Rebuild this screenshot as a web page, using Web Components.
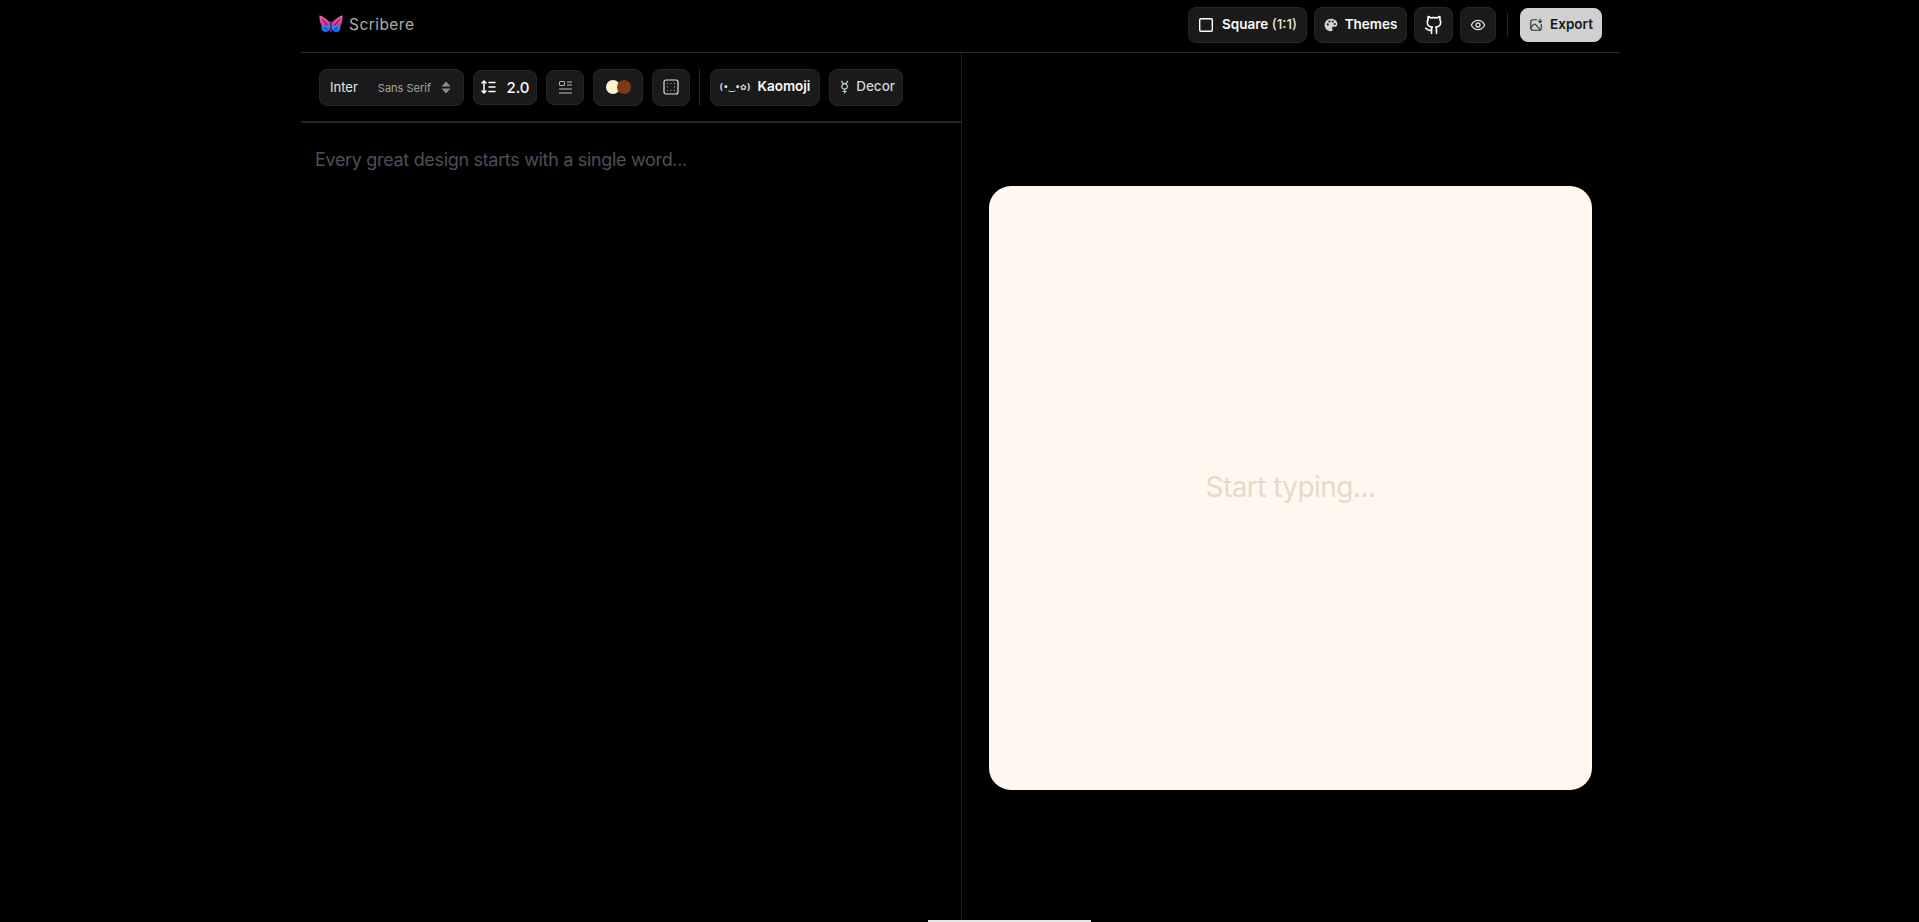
<!DOCTYPE html>
<html lang="en">
<head>
<meta charset="utf-8">
<title>Scribere</title>
<style>
  html, body { margin: 0; height: 100%; background: #000; overflow: hidden; }
  body { font-family: Inter, "Liberation Sans", sans-serif; }
</style>
</head>
<body>
<scribere-app>
  <scribere-header slot="header">
    <tool-btn slot="actions" style="width:119px;height:36px;--gap:8px">
      <svg slot="icon" width="16" height="16" viewBox="0 0 16 16" fill="none" stroke="#fff" stroke-width="1.4"><rect x="1.700" y="1.700" width="12.600" height="12.600" rx="1.200"/></svg>
      <span>Square <span style="color:#e8e2d4;font-weight:500">(1:1)</span></span>
    </tool-btn>
    <tool-btn slot="actions" style="width:93px;height:36px;--gap:7px">
      <svg slot="icon" width="14" height="14" viewBox="0 0 16 16"><path fill="#d4d4d4" fill-rule="evenodd" d="M8 .8C3.900.8.700 4 .700 8s3.200 7.200 7.300 7.200c1.200 0 1.900-.8 1.900-1.700 0-.5-.2-.8-.4-1.100-.2-.3-.4-.6-.4-1 0-.8.600-1.300 1.400-1.300h1.700c1.900 0 3.100-1.400 3.100-3.300C15.300 3.400 12 .8 8 .8zM4.300 8.500a1.200 1.200 0 1 1 0-2.400 1.200 1.200 0 0 1 0 2.400zM6.300 5.200a1.200 1.200 0 1 1 0-2.400 1.200 1.200 0 0 1 0 2.400zM10 5.200a1.200 1.200 0 1 1 0-2.400 1.200 1.200 0 0 1 0 2.400zM12.300 8a1.200 1.200 0 1 1 0-2.400 1.200 1.200 0 0 1 0 2.400z"/></svg>
      Themes
    </tool-btn>
    <tool-btn slot="actions" style="width:39px;height:36px">
      <svg slot="icon" width="20" height="20" viewBox="0 0 24 24" fill="none" stroke="#fff" stroke-width="2" stroke-linecap="round" stroke-linejoin="round"><path d="M15 22v-4a4.800 4.800 0 0 0-1-3.500c3 0 6-2 6-5.500.08-1.250-.27-2.480-1-3.500.28-1.150.28-2.350 0-3.500 0 0-1 0-3 1.500-2.640-.5-5.360-.5-8 0C6 2 5 2 5 2c-.3 1.150-.3 2.350 0 3.500A5.400 5.400 0 0 0 4 9c0 3.500 3 5.500 6 5.500-.39.490-.68 1.050-.85 1.650-.17.600-.22 1.230-.15 1.850v4"/><path d="M9 18c-4.510 2-5-2-7-2"/></svg>
    </tool-btn>
    <tool-btn slot="actions" style="width:36px;height:36px">
      <svg slot="icon" width="16" height="16" viewBox="0 0 24 24" fill="none" stroke="#ddd" stroke-width="2" stroke-linecap="round" stroke-linejoin="round"><path d="M2 12s3.500-7 10-7 10 7 10 7-3.500 7-10 7-10-7-10-7z"/><circle cx="12" cy="12" r="3"/></svg>
    </tool-btn>
    <tool-sep slot="actions" style="margin:0 5px 0 4px;height:24px"></tool-sep>
    <tool-btn slot="actions" primary style="width:82px;height:34px;--gap:7px">
      <svg slot="icon" width="14" height="14" viewBox="0 0 24 24" fill="none" stroke="#333" stroke-width="2" stroke-linecap="round" stroke-linejoin="round"><path d="M13 3H7a4 4 0 0 0-4 4v10a4 4 0 0 0 4 4h10a4 4 0 0 0 4-4v-6"/><path d="M3 17l5-6a2 2 0 0 1 3 0l8 9"/><path d="M19 2v6M16.500 5.500 19 8l2.500-2.500"/></svg>
      Export
    </tool-btn>
  </scribere-header>

  <editor-pane slot="left">
    <tool-btn slot="tools" style="width:145px;height:37px;margin-right:9px" flat>
      <font-picker family="Inter" kind="Sans Serif"></font-picker>
    </tool-btn>
    <tool-btn slot="tools" style="width:64px;height:35px;margin-right:9px;--gap:10px">
      <svg slot="icon" width="16" height="16" viewBox="0 0 16 16" fill="none" stroke="#fff" stroke-width="1.500" stroke-linecap="round" stroke-linejoin="round"><path d="M4 2v12M2 4l2-2 2 2M2 12l2 2 2-2M9 3.500h6M9 8h6M9 12.500h6"/></svg>
      <span style="font-size:15px;font-weight:500">2.0</span>
    </tool-btn>
    <tool-btn slot="tools" style="width:38px;height:35px;margin-right:9px">
      <svg slot="icon" width="15" height="15" viewBox="0 0 15 15" fill="none" stroke="#bbb" stroke-width="1"><rect x="1.500" y="1.500" width="5" height="4" rx=".6"/><path d="M9 2h5M9 5h5M1 9h13M1 13h13"/></svg>
    </tool-btn>
    <tool-btn slot="tools" style="width:50px;height:37px;margin-right:9px">
      <colour-dots slot="icon"></colour-dots>
    </tool-btn>
    <tool-btn slot="tools" style="width:38px;height:37px">
      <svg slot="icon" width="16" height="16" viewBox="0 0 16 16" fill="none"><rect x="1" y="1" width="14" height="14" rx="2" stroke="#e0e0e0" stroke-width="1.200"/><path d="M4.500 4.500h.01M8 4.500h.01M11.500 4.500h.01M4.500 8h.01M11.500 8h.01M4.500 11.500h.01M8 11.500h.01M11.500 11.500h.01" stroke="#ccc" stroke-width="1" stroke-linecap="round"/></svg>
    </tool-btn>
    <tool-sep slot="tools" style="margin:0 10px 0 9px;height:37px"></tool-sep>
    <tool-btn slot="tools" style="width:110px;height:37px;margin-right:9px;--gap:7px">
      <span slot="icon" style="font:700 8px 'DejaVu Sans',sans-serif;color:#ddd;white-space:nowrap">(•‿•✿)</span>
      Kaomoji
    </tool-btn>
    <tool-btn slot="tools" style="width:74px;height:37px;--gap:7px;padding-left:3px;color:#d4d4d8;font-weight:500">
      <span slot="icon" style="font:400 15px/1 'DejaVu Sans',sans-serif;color:#ddd">☿</span>
      Decor
    </tool-btn>
    <span slot="placeholder">Every great design starts with a single word...</span>
  </editor-pane>

  <preview-pane slot="right">Start typing...</preview-pane>
</scribere-app>

<script>
class ScribereApp extends HTMLElement {
  constructor() {
    super();
    this.attachShadow({ mode: "open" }).innerHTML = `
      <style>
        :host { display: block; height: 100vh; position: relative; overflow: hidden; background: #000; }
        .wrap { width: 1319px; height: 100%; margin-left: 301px; display: flex; flex-direction: column; }
        .main { flex: 1; display: flex; min-height: 0; }
        .toast { position: absolute; left: 928px; bottom: 0; width: 163px; height: 2px; background: #e5e5e5; }
      </style>
      <div class="wrap">
        <slot name="header"></slot>
        <div class="main"><slot name="left"></slot><slot name="right"></slot></div>
      </div>
      <div class="toast"></div>`;
  }
}

class ScribereHeader extends HTMLElement {
  constructor() {
    super();
    this.attachShadow({ mode: "open" }).innerHTML = `
      <style>
        :host { display: block; height: 52px; border-bottom: 1px solid #2a2a2a; box-sizing: content-box; }
        .bar { height: 100%; display: flex; align-items: center; justify-content: space-between; padding: 0 18px; }
        .brand { display: flex; align-items: center; gap: 6px; color: #adadad; font-size: 15.500px; letter-spacing: .45px; padding-bottom: 4px; }
        .actions { display: flex; align-items: center; gap: 7px; padding-bottom: 3px; }
        svg { display: block; }
      </style>
      <div class="bar">
        <div class="brand">
          <svg width="24" height="18" viewBox="0 0 23 17.500">
            <defs>
              <linearGradient id="top" x1="0" y1="0" x2="0" y2="1"><stop offset="0" stop-color="#f062ac"/><stop offset="1" stop-color="#c4358c"/></linearGradient>
              <linearGradient id="bot" x1="0" y1="0" x2="0" y2="1"><stop offset="0" stop-color="#2a8cf5"/><stop offset="1" stop-color="#1e5fe0"/></linearGradient>
            </defs>
            <path fill="url(#top)" d="M11 7.500 C8 4.500 4 1.800 .3 .3 C.1 4 .8 8 2.500 11 L11 11Z"/>
            <path fill="url(#top)" d="M12 7.500 C15 4.500 19 1.800 22.700 .3 C22.900 4 22.200 8 20.500 11 L12 11Z"/>
            <path fill="url(#bot)" d="M11 10.500 L2.500 10.500 C1.800 13 2.800 16 5.500 16.800 C8 17.300 10.300 15 11 13Z"/>
            <path fill="url(#bot)" d="M12 10.500 L20.500 10.500 C21.200 13 20.200 16 17.500 16.800 C15 17.300 12.700 15 12 13Z"/>
            <path fill="#5b2d9e" d="M10.700 6h1.600v10c0 1-1.600 1-1.600 0z"/>
            <path stroke="#000" stroke-width=".6" fill="none" d="M3 4l5 6M20 4l-5 6M5 12l3 2M18 12l-3 2"/>
          </svg>
          <span>Scribere</span>
        </div>
        <div class="actions"><slot name="actions"></slot></div>
      </div>`;
  }
}

class ToolBtn extends HTMLElement {
  constructor() {
    super();
    this.attachShadow({ mode: "open" }).innerHTML = `
      <style>
        :host { display: inline-flex; align-items: center; justify-content: center; gap: var(--gap, 0); flex: none; box-sizing: border-box;
          background: #1a1a1a; border: 1px solid #262626; border-radius: 8px; color: #fafafa;
          font: 600 13.500px/1 Inter, "Liberation Sans", sans-serif; white-space: nowrap; }
        :host([primary]) { background: #d0d0d0; border-color: #d0d0d0; color: #171717; }
        :host([flat]) { justify-content: stretch; }
        ::slotted(svg) { display: block; flex: none; }
      </style>
      <slot name="icon"></slot><slot></slot>`;
  }
}

class ToolSep extends HTMLElement {
  constructor() {
    super();
    this.attachShadow({ mode: "open" }).innerHTML = `
      <style>:host { display: block; width: 1px; flex: none; background: #262626; }</style>`;
  }
}

class FontPicker extends HTMLElement {
  constructor() {
    super();
    const family = this.getAttribute("family"), kind = this.getAttribute("kind");
    this.attachShadow({ mode: "open" }).innerHTML = `
      <style>
        :host { display: flex; align-items: center; width: 100%; padding: 0 12px 0 10px; box-sizing: border-box; }
        .family { font-size: 13px; font-weight: 400; color: #e5e5e5; }
        .kind { margin-left: auto; font-size: 11px; font-weight: 400; color: #a3a3a3; margin-right: 10px; padding-top: 2px; }
        svg { display: block; }
      </style>
      <span class="family">${family}</span>
      <span class="kind">${kind}</span>
      <svg width="10" height="13" viewBox="0 0 10 13" fill="#8a8a8a"><path d="M5 .5 9.500 5.500h-9zM5 12.500.5 7.500h9z"/></svg>`;
  }
}

class ColourDots extends HTMLElement {
  constructor() {
    super();
    this.attachShadow({ mode: "open" }).innerHTML = `
      <style>
        :host { display: flex; }
        i { display: block; width: 14px; height: 14px; border-radius: 50%; }
        .a { background: #fff3cf; position: relative; z-index: 1; }
        .b { background: #7c3a12; margin-left: -3px; position: relative; z-index: 2; }
      </style>
      <i class="a"></i><i class="b"></i>`;
  }
}

class EditorPane extends HTMLElement {
  constructor() {
    super();
    this.attachShadow({ mode: "open" }).innerHTML = `
      <style>
        :host { display: flex; flex-direction: column; width: 660px; flex: none; box-sizing: content-box; border-right: 1px solid #1f1f1f; }
        .tools { height: 70px; box-sizing: border-box; display: flex; align-items: center; padding: 0 0 0 18px; border-bottom: 2px solid #262626; }
        .text { padding: 23px 14px; font-size: 18px; line-height: 28px; letter-spacing: -.018em; color: #4d4f5b; }
      </style>
      <div class="tools"><slot name="tools"></slot></div>
      <div class="text"><slot name="placeholder"></slot></div>`;
  }
}

class PreviewPane extends HTMLElement {
  constructor() {
    super();
    this.attachShadow({ mode: "open" }).innerHTML = `
      <style>
        :host { display: flex; flex: 1; align-items: flex-start; justify-content: flex-start; padding: 133px 0 0 27px; box-sizing: border-box; }
        .card { width: 603px; height: 604px; border-radius: 22px; background: #fff8ee; display: flex; align-items: center; justify-content: center;
          color: #e2dacd; font-size: 28px; letter-spacing: -.02em; padding-bottom: 2px; box-sizing: border-box; }
      </style>
      <div class="card"><slot></slot></div>`;
  }
}

customElements.define("scribere-app", ScribereApp);
customElements.define("scribere-header", ScribereHeader);
customElements.define("tool-btn", ToolBtn);
customElements.define("tool-sep", ToolSep);
customElements.define("font-picker", FontPicker);
customElements.define("colour-dots", ColourDots);
customElements.define("editor-pane", EditorPane);
customElements.define("preview-pane", PreviewPane);
</script>
</body>
</html>
